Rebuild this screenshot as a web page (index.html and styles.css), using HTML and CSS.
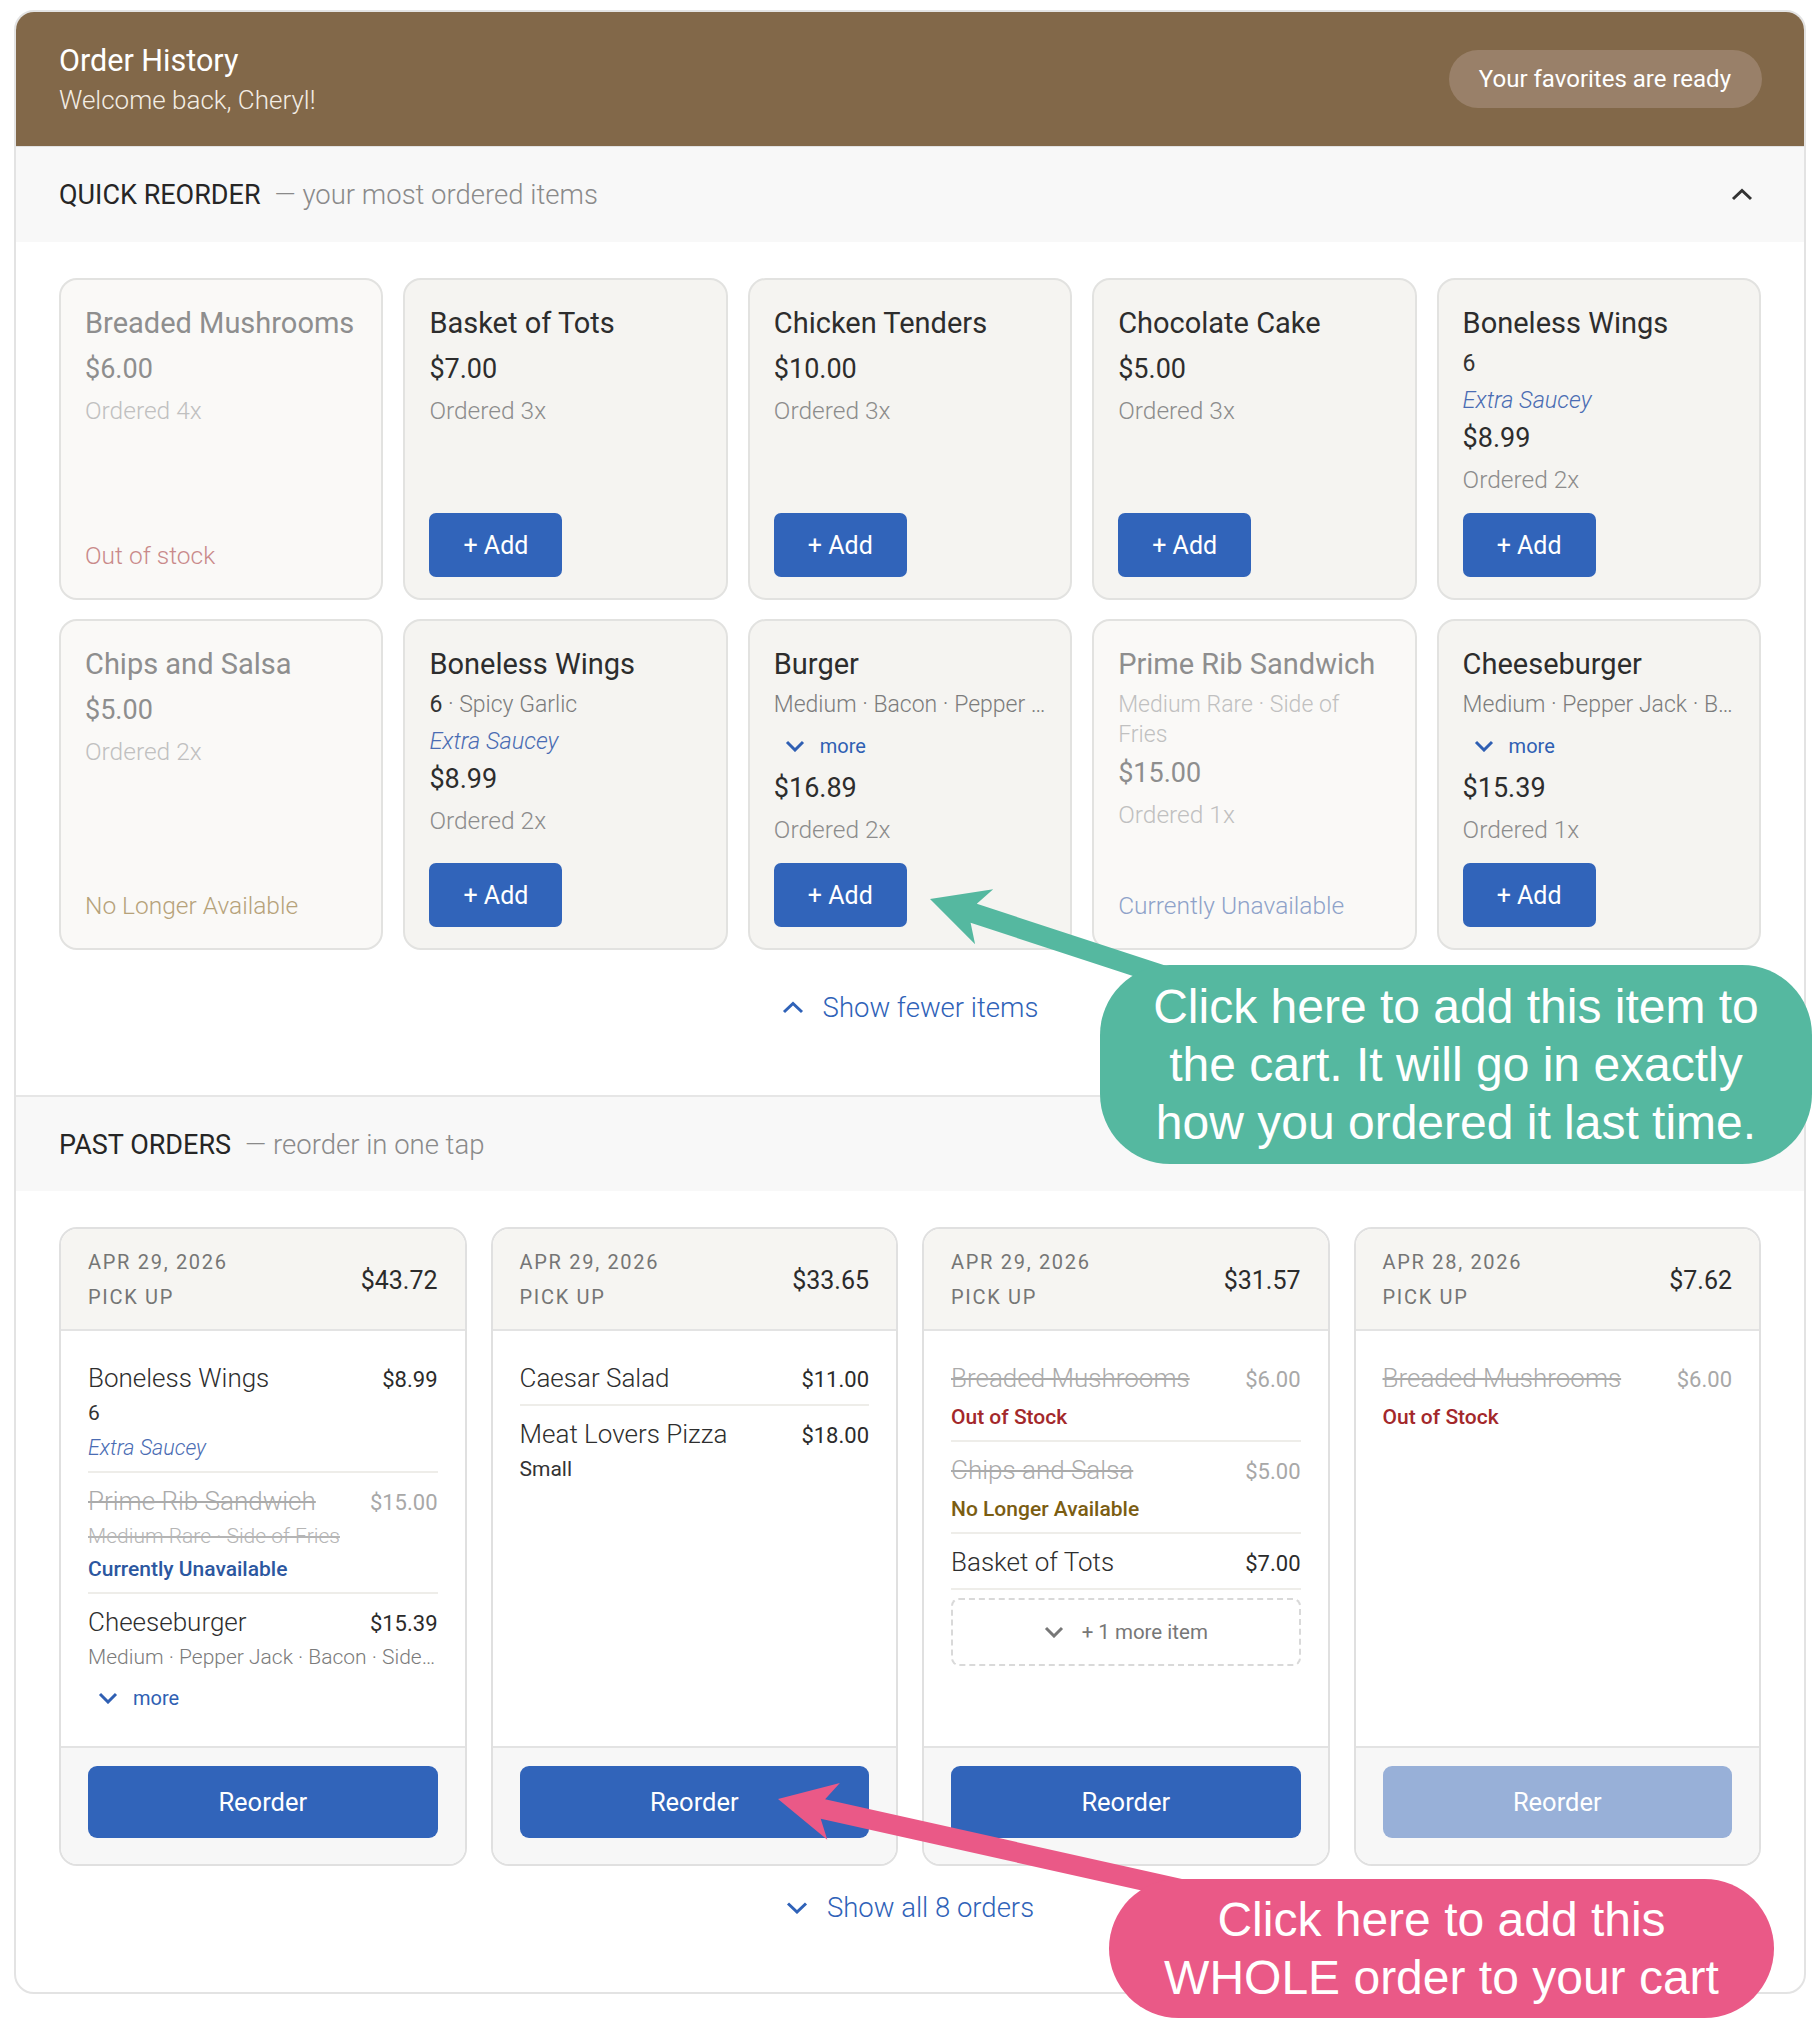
FILE: index.html
```html
<!DOCTYPE html>
<html lang="en">
<head>
<meta charset="utf-8">
<title>Order History</title>
<link rel="stylesheet" href="styles.css">
</head>
<body>
<div class="page">
  <div class="panel">
    <header class="top">
      <div class="top-text">
        <h1 class="top-title">Order History</h1>
        <p class="top-sub">Welcome back, Cheryl!</p>
      </div>
      <span class="pill">Your favorites are ready</span>
    </header>

    <section class="section">
      <div class="bar">
        <h2 class="bar-head"><span class="bar-title">QUICK REORDER</span><span class="bar-sub">— your most ordered items</span></h2>
        <span class="bar-toggle"><svg width="22" height="13" viewBox="0 0 22 13"><path d="M2 11 L11 2.5 L20 11" fill="none" stroke="#333" stroke-width="3"/></svg></span>
      </div>
      <div class="body quick-body">
        <div class="quick-grid">
          <div class="qcard off">
            <div class="q-title">Breaded Mushrooms</div>
            <div class="q-price">$6.00</div>
            <div class="q-count">Ordered 4x</div>
            <div class="q-spacer"></div>
            <div class="q-status st-out">Out of stock</div>
          </div>
          <div class="qcard">
            <div class="q-title">Basket of Tots</div>
            <div class="q-price">$7.00</div>
            <div class="q-count">Ordered 3x</div>
            <div class="q-spacer"></div>
            <button class="add">+ Add</button>
          </div>
          <div class="qcard">
            <div class="q-title">Chicken Tenders</div>
            <div class="q-price">$10.00</div>
            <div class="q-count">Ordered 3x</div>
            <div class="q-spacer"></div>
            <button class="add">+ Add</button>
          </div>
          <div class="qcard">
            <div class="q-title">Chocolate Cake</div>
            <div class="q-price">$5.00</div>
            <div class="q-count">Ordered 3x</div>
            <div class="q-spacer"></div>
            <button class="add">+ Add</button>
          </div>
          <div class="qcard">
            <div class="q-title">Boneless Wings</div>
            <div class="q-mods"><span class="mod-main">6</span></div>
            <div class="q-note">Extra Saucey</div>
            <div class="q-price">$8.99</div>
            <div class="q-count">Ordered 2x</div>
            <div class="q-spacer"></div>
            <button class="add">+ Add</button>
          </div>

          <div class="qcard off">
            <div class="q-title">Chips and Salsa</div>
            <div class="q-price">$5.00</div>
            <div class="q-count">Ordered 2x</div>
            <div class="q-spacer"></div>
            <div class="q-status st-gone">No Longer Available</div>
          </div>
          <div class="qcard">
            <div class="q-title">Boneless Wings</div>
            <div class="q-mods"><span class="mod-main">6</span> · Spicy Garlic</div>
            <div class="q-note">Extra Saucey</div>
            <div class="q-price">$8.99</div>
            <div class="q-count">Ordered 2x</div>
            <div class="q-spacer"></div>
            <button class="add">+ Add</button>
          </div>
          <div class="qcard">
            <div class="q-title">Burger</div>
            <div class="q-mods trunc">Medium · Bacon · Pepper Jack · Side of Fries</div>
            <div class="more q-more"><svg width="20" height="12" viewBox="0 0 20 12"><path d="M2 2 L10 10 L18 2" fill="none" stroke="#2f5fb3" stroke-width="3"/></svg><span>more</span></div>
            <div class="q-price">$16.89</div>
            <div class="q-count">Ordered 2x</div>
            <div class="q-spacer"></div>
            <button class="add">+ Add</button>
          </div>
          <div class="qcard off">
            <div class="q-title">Prime Rib Sandwich</div>
            <div class="q-mods">Medium Rare · Side of Fries</div>
            <div class="q-price">$15.00</div>
            <div class="q-count">Ordered 1x</div>
            <div class="q-spacer"></div>
            <div class="q-status st-unav">Currently Unavailable</div>
          </div>
          <div class="qcard">
            <div class="q-title">Cheeseburger</div>
            <div class="q-mods trunc">Medium · Pepper Jack · Bacon · Side of Fries</div>
            <div class="more q-more"><svg width="20" height="12" viewBox="0 0 20 12"><path d="M2 2 L10 10 L18 2" fill="none" stroke="#2f5fb3" stroke-width="3"/></svg><span>more</span></div>
            <div class="q-price">$15.39</div>
            <div class="q-count">Ordered 1x</div>
            <div class="q-spacer"></div>
            <button class="add">+ Add</button>
          </div>
        </div>
        <div class="link-row quick-link">
          <span class="link"><svg width="22" height="13" viewBox="0 0 22 13"><path d="M2 11 L11 2.5 L20 11" fill="none" stroke="#2f62b8" stroke-width="3"/></svg>Show fewer items</span>
        </div>
      </div>
    </section>

    <section class="section past">
      <div class="bar">
        <h2 class="bar-head"><span class="bar-title">PAST ORDERS</span><span class="bar-sub">— reorder in one tap</span></h2>
      </div>
      <div class="body past-body">
        <div class="order-grid">
          <div class="ocard">
            <div class="oc-head">
              <div class="oc-meta"><div>Apr 29, 2026</div><div>Pick up</div></div>
              <div class="oc-total">$43.72</div>
            </div>
            <div class="oc-body">
              <div class="oi">
                <div class="oi-row"><span class="oi-name">Boneless Wings</span><span class="oi-price">$8.99</span></div>
                <div class="oi-opt dark">6</div>
                <div class="oi-note">Extra Saucey</div>
              </div>
              <div class="oi">
                <div class="oi-row"><span class="oi-name struck">Prime Rib Sandwich</span><span class="oi-price muted">$15.00</span></div>
                <div class="oi-opt struck">Medium Rare · Side of Fries</div>
                <div class="oi-status after-opt st-unav-d">Currently Unavailable</div>
              </div>
              <div class="oi">
                <div class="oi-row"><span class="oi-name">Cheeseburger</span><span class="oi-price">$15.39</span></div>
                <div class="oi-opt trunc">Medium · Pepper Jack · Bacon · Side of Fries</div>
                <div class="more o-more"><svg width="20" height="12" viewBox="0 0 20 12"><path d="M2 2 L10 10 L18 2" fill="none" stroke="#2f5fb3" stroke-width="3"/></svg><span>more</span></div>
              </div>
            </div>
            <div class="oc-foot"><button class="reorder">Reorder</button></div>
          </div>

          <div class="ocard">
            <div class="oc-head">
              <div class="oc-meta"><div>Apr 29, 2026</div><div>Pick up</div></div>
              <div class="oc-total">$33.65</div>
            </div>
            <div class="oc-body">
              <div class="oi">
                <div class="oi-row"><span class="oi-name">Caesar Salad</span><span class="oi-price">$11.00</span></div>
              </div>
              <div class="oi">
                <div class="oi-row"><span class="oi-name">Meat Lovers Pizza</span><span class="oi-price">$18.00</span></div>
                <div class="oi-opt dark">Small</div>
              </div>
            </div>
            <div class="oc-foot"><button class="reorder">Reorder</button></div>
          </div>

          <div class="ocard">
            <div class="oc-head">
              <div class="oc-meta"><div>Apr 29, 2026</div><div>Pick up</div></div>
              <div class="oc-total">$31.57</div>
            </div>
            <div class="oc-body">
              <div class="oi">
                <div class="oi-row"><span class="oi-name struck">Breaded Mushrooms</span><span class="oi-price muted">$6.00</span></div>
                <div class="oi-status st-out-d">Out of Stock</div>
              </div>
              <div class="oi">
                <div class="oi-row"><span class="oi-name struck">Chips and Salsa</span><span class="oi-price muted">$5.00</span></div>
                <div class="oi-status st-gone-d">No Longer Available</div>
              </div>
              <div class="oi">
                <div class="oi-row"><span class="oi-name">Basket of Tots</span><span class="oi-price">$7.00</span></div>
              </div>
              <div class="more-items"><svg width="20" height="12" viewBox="0 0 20 12"><path d="M2 2 L10 10 L18 2" fill="none" stroke="#777" stroke-width="3"/></svg><span>+ 1 more item</span></div>
            </div>
            <div class="oc-foot"><button class="reorder">Reorder</button></div>
          </div>

          <div class="ocard">
            <div class="oc-head">
              <div class="oc-meta"><div>Apr 28, 2026</div><div>Pick up</div></div>
              <div class="oc-total">$7.62</div>
            </div>
            <div class="oc-body">
              <div class="oi">
                <div class="oi-row"><span class="oi-name struck">Breaded Mushrooms</span><span class="oi-price muted">$6.00</span></div>
                <div class="oi-status st-out-d">Out of Stock</div>
              </div>
            </div>
            <div class="oc-foot"><button class="reorder disabled">Reorder</button></div>
          </div>
        </div>
        <div class="link-row past-link">
          <span class="link"><svg width="22" height="13" viewBox="0 0 22 13"><path d="M2 2.5 L11 11 L20 2.5" fill="none" stroke="#2f62b8" stroke-width="3"/></svg>Show all 8 orders</span>
        </div>
      </div>
    </section>
  </div>

  <svg class="arrows" width="1816" height="2020" viewBox="0 0 1816 2020">
    <polygon fill="#55b8a0" points="930,899 993.2,889.2 976.8,903.8 1189.6,973.5 1183.4,992.5 970.6,922.8 975.1,944.3"/>
    <polygon fill="#ea5987" points="778,1799 839.9,1783.1 825.1,1799.3 1199.9,1882.9 1195.5,1902.5 820.7,1818.8 827.3,1839.7"/>
  </svg>
  <div class="callout callout-green">Click here to add this item to<br>the cart. It will go in exactly<br>how you ordered it last time.</div>
  <div class="callout callout-pink">Click here to add this<br>WHOLE order to your cart</div>
</div>
</body>
</html>
```

FILE: styles.css
```css
* { box-sizing: border-box; }
html, body { margin: 0; padding: 0; }
body {
  font-family: Roboto, "Liberation Sans", sans-serif;
  color: #2d2d2d;
  background: #ffffff;
}
button { font-family: inherit; cursor: pointer; }

.page {
  position: relative;
  width: 1816px;
  height: 2020px;
  padding: 10px 0 0 14px;
  overflow: hidden;
}

.panel {
  width: 1792px;
  border: 2px solid #e3e3e3;
  border-radius: 20px;
  overflow: hidden;
  background: #fff;
}

/* header */
.top {
  height: 135px;
  background: #826849;
  border-bottom: 1px solid #e2e2e2;
  display: flex;
  align-items: center;
  justify-content: space-between;
  padding: 0 42px 0 43px;
}
.top-title {
  margin: 0;
  font-size: 30.5px;
  line-height: 36px;
  font-weight: 400;
  color: #fff;
}
.top-sub {
  margin: 5px 0 0;
  font-size: 26px;
  line-height: 32px;
  font-weight: 300;
  color: #f3ede4;
}
.pill {
  display: flex;
  align-items: center;
  height: 58px;
  padding: 0 31px 0 30px;
  border-radius: 29px;
  background: #998069;
  color: #fff;
  font-size: 24px;
}

/* section bars */
.bar {
  height: 95px;
  background: #f8f8f8;
  display: flex;
  align-items: center;
  justify-content: space-between;
  padding: 0 43px;
}
.bar-head { margin: 0; font-weight: 400; display: flex; align-items: baseline; }
.bar-title { font-size: 27px; color: #262626; }
.bar-sub { font-size: 27.5px; font-weight: 300; color: #8a8a8a; margin-left: 14px; }
.bar-toggle {
  width: 40px; height: 40px;
  display: flex; align-items: center; justify-content: center;
  margin-right: -1px;
}

.past { border-top: 2px solid #e6e6e6; }
.past .bar { height: 94px; }

.body { padding: 36px 43px 0; }
.quick-body { padding-bottom: 70px; }
.past-body { padding-bottom: 67px; }

/* quick cards */
.quick-grid {
  display: grid;
  grid-template-columns: repeat(5, 1fr);
  column-gap: 20px;
  row-gap: 19px;
}
.qcard {
  background: #f5f4f1;
  border: 2px solid #e2e2e0;
  border-radius: 18px;
  padding: 24px 24px 21px;
  display: flex;
  flex-direction: column;
  min-width: 0;
}
.q-title { font-size: 29px; line-height: 38px; color: #2d2d2d; margin-bottom: 4px; }
.q-mods { font-size: 23px; line-height: 30px; font-weight: 300; color: #7c7c7c; margin-top: 3px; }
.q-mods.trunc, .oi-opt.trunc { white-space: nowrap; overflow: hidden; text-overflow: ellipsis; }
.mod-main { color: #333; font-weight: 400; }
.q-note { font-size: 23.5px; line-height: 30px; font-style: italic; font-weight: 300; color: #4a6cb3; margin-top: 6px; }
.q-price { font-size: 27px; line-height: 34px; color: #2d2d2d; margin-top: 6px; }
.q-count { font-size: 24.5px; line-height: 30px; font-weight: 300; color: #8c8c8c; margin-top: 10px; }
.q-spacer { flex: 1; min-height: 18px; }
.q-status { font-size: 24.5px; line-height: 30px; font-weight: 300; padding-bottom: 6px; }
.st-out { color: #c98a8a; }
.st-gone { color: #b6a27a; }
.st-unav { color: #8ea2c9; }

.qcard.off { background: #faf9f7; }
.qcard.off .q-title, .qcard.off .q-price { color: #8e8e8e; }
.qcard.off .q-count, .qcard.off .q-mods { color: #c0c0c0; }

.add {
  align-self: flex-start;
  width: 133px;
  height: 64px;
  border: none;
  border-radius: 7px;
  background: #3164ba;
  color: #fff;
  font-size: 25px;
}

.more {
  display: flex;
  align-items: center;
  gap: 15px;
  height: 32px;
  padding-left: 11px;
  color: #2f5fb3;
  font-size: 20px;
}
.q-more { margin-top: 10px; margin-bottom: 3px; }
.o-more { margin-top: 12px; padding-left: 10px; }

/* links */
.link-row { display: flex; justify-content: center; }
.quick-link { margin-top: 39px; }
.past-link { margin-top: 23px; }
.link {
  display: inline-flex;
  align-items: center;
  gap: 19px;
  height: 36px;
  font-size: 27.5px;
  font-weight: 300;
  color: #2f62b8;
}

/* past orders */
.order-grid {
  display: grid;
  grid-template-columns: repeat(4, 1fr);
  column-gap: 24px;
}
.ocard {
  border: 2px solid #e0e0e0;
  border-radius: 18px;
  overflow: hidden;
  display: flex;
  flex-direction: column;
  background: #fff;
  min-width: 0;
}
.oc-head {
  background: #f6f5f2;
  border-bottom: 2px solid #e3e3e3;
  padding: 16px 27px 14px;
  display: flex;
  align-items: center;
  justify-content: space-between;
}
.oc-meta {
  font-size: 20px;
  line-height: 35px;
  letter-spacing: 1.7px;
  text-transform: uppercase;
  color: #757575;
}
.oc-total { font-size: 25px; color: #2b2b2b; }

.oc-body { flex: 1; padding: 19px 27px 22px; }
.oi { padding: 12px 0 10px; border-bottom: 2px solid #eeede9; }
.oi:last-child { border-bottom: none; }
.oi-row { display: flex; justify-content: space-between; align-items: baseline; gap: 12px; }
.oi-name { font-size: 26px; line-height: 32px; font-weight: 300; color: #2e2e2e; white-space: nowrap; }
.oi-price { font-size: 22px; color: #2b2b2b; }
.oi-price.muted { color: #a8a8a8; }
.struck { text-decoration: line-through; color: #ababab; }
.oi-opt { font-size: 21px; line-height: 26px; color: #7b7b7b; margin-top: 6px; font-weight: 300; }
.oi-opt.dark { color: #333; font-weight: 400; }
.oi-opt.struck { color: #b5b5b5; }
.oi-note { font-size: 21.5px; line-height: 26px; font-style: italic; font-weight: 300; color: #4a6cb3; margin-top: 9px; }
.oi-status { font-size: 21px; line-height: 26px; font-weight: 500; margin-top: 10px; }
.oi-status.after-opt { margin-top: 7px; }
.st-out-d { color: #a3282b; }
.st-gone-d { color: #7b5d12; }
.st-unav-d { color: #2c57a0; }

.more-items {
  margin-top: 8px;
  height: 68px;
  border: 2px dashed #d9d9d9;
  border-radius: 8px;
  display: flex;
  align-items: center;
  justify-content: center;
  gap: 18px;
  color: #777;
  font-size: 20.5px;
}

.oc-foot {
  background: #f7f7f7;
  border-top: 2px solid #e3e3e3;
  padding: 18px 27px 26px;
}
.reorder {
  display: block;
  width: 100%;
  height: 72px;
  border: none;
  border-radius: 9px;
  background: #3164ba;
  color: #fff;
  font-size: 25.5px;
}
.reorder.disabled { background: #98b0d8; }

/* annotation overlays */
.arrows {
  position: absolute;
  top: 0;
  left: 0;
  z-index: 5;
  pointer-events: none;
}
.callout {
  position: absolute;
  z-index: 6;
  display: flex;
  align-items: center;
  justify-content: center;
  text-align: center;
  color: #fff;
  font-family: "Liberation Sans", Arial, sans-serif;
  font-size: 48px;
  line-height: 58px;
  border-radius: 70px;
}
.callout-green {
  left: 1100px;
  top: 965px;
  width: 712px;
  height: 199px;
  background: #55b8a0;
}
.callout-pink {
  left: 1109px;
  top: 1879px;
  width: 665px;
  height: 139px;
  background: #ea5987;
}
```
